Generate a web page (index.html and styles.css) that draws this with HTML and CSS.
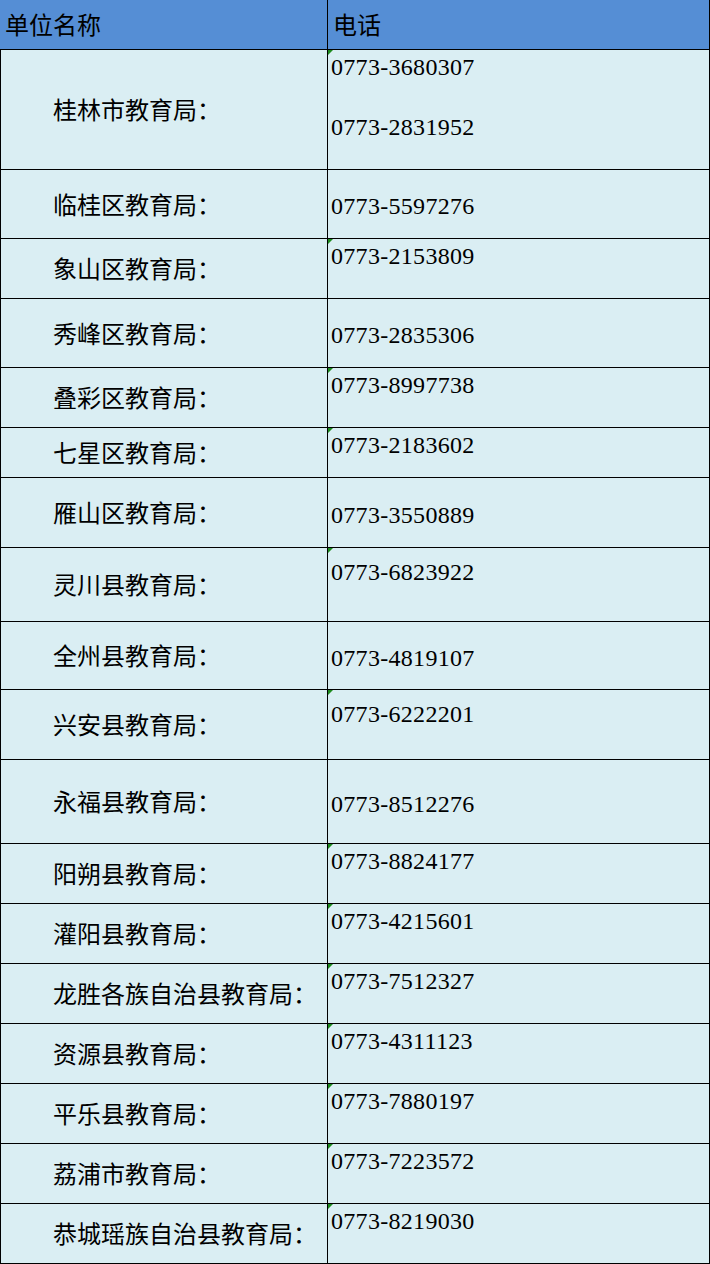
FILE: index.html
```html
<!DOCTYPE html>
<html lang="zh-CN">
<head>
<meta charset="utf-8">
<title>单位名称 电话</title>
<link rel="stylesheet" href="styles.css">
</head>
<body>
<div class="sheet">
  <div class="row head h50">
    <div class="name">单位名称</div>
    <div class="tel">电话</div>
  </div>
  <div class="row h120">
    <div class="name">桂林市教育局：</div>
    <div class="tel top mark multi"><span>0773-3680307</span><span>0773-2831952</span></div>
  </div>
  <div class="row h69">
    <div class="name">临桂区教育局：</div>
    <div class="tel">0773-5597276</div>
  </div>
  <div class="row h60">
    <div class="name">象山区教育局：</div>
    <div class="tel top mark">0773-2153809</div>
  </div>
  <div class="row h69">
    <div class="name">秀峰区教育局：</div>
    <div class="tel">0773-2835306</div>
  </div>
  <div class="row h60">
    <div class="name">叠彩区教育局：</div>
    <div class="tel top mark">0773-8997738</div>
  </div>
  <div class="row h50">
    <div class="name">七星区教育局：</div>
    <div class="tel top mark">0773-2183602</div>
  </div>
  <div class="row h70">
    <div class="name">雁山区教育局：</div>
    <div class="tel">0773-3550889</div>
  </div>
  <div class="row h74">
    <div class="name">灵川县教育局：</div>
    <div class="tel top low mark">0773-6823922</div>
  </div>
  <div class="row h68">
    <div class="name">全州县教育局：</div>
    <div class="tel">0773-4819107</div>
  </div>
  <div class="row h70">
    <div class="name">兴安县教育局：</div>
    <div class="tel top low mark">0773-6222201</div>
  </div>
  <div class="row h84">
    <div class="name">永福县教育局：</div>
    <div class="tel">0773-8512276</div>
  </div>
  <div class="row h60">
    <div class="name">阳朔县教育局：</div>
    <div class="tel top mark">0773-8824177</div>
  </div>
  <div class="row h60">
    <div class="name">灌阳县教育局：</div>
    <div class="tel top mark">0773-4215601</div>
  </div>
  <div class="row h60">
    <div class="name">龙胜各族自治县教育局：</div>
    <div class="tel top mark">0773-7512327</div>
  </div>
  <div class="row h60">
    <div class="name">资源县教育局：</div>
    <div class="tel top mark">0773-4311123</div>
  </div>
  <div class="row h60">
    <div class="name">平乐县教育局：</div>
    <div class="tel top mark">0773-7880197</div>
  </div>
  <div class="row h60">
    <div class="name">荔浦市教育局：</div>
    <div class="tel top mark">0773-7223572</div>
  </div>
  <div class="row h60">
    <div class="name">恭城瑶族自治县教育局：</div>
    <div class="tel top mark">0773-8219030</div>
  </div>
</div>
</body>
</html>
```

FILE: styles.css
```css
* {
  box-sizing: border-box;
}

html, body {
  margin: 0;
  padding: 0;
  background: #ffffff;
}

.sheet {
  width: 710px;
  font-family: "Liberation Serif", "Noto Sans CJK SC", serif;
  font-size: 24px;
  line-height: 28px;
  color: #000;
}

.row {
  display: flex;
  border-bottom: 1px solid #000;
  background: #daeef3;
}

.h50 { height: 50px; }
.h60 { height: 60px; }
.h68 { height: 68px; }
.h69 { height: 69px; }
.h70 { height: 70px; }
.h74 { height: 74px; }
.h84 { height: 84px; }
.h120 { height: 120px; }

.name {
  width: 328px;
  flex: none;
  border-left: 1px solid #000;
  border-right: 1px solid #000;
  padding: 3px 0 0 52px;
  display: flex;
  align-items: center;
  white-space: nowrap;
}

.tel {
  flex: 1;
  border-right: 1px solid #000;
  padding: 4px 0 0 3px;
  display: flex;
  align-items: center;
  position: relative;
  white-space: nowrap;
  letter-spacing: 0.3px;
}

.tel.top {
  align-items: flex-start;
  padding-top: 3px;
}

.tel.low {
  padding-top: 10px;
}

.tel.multi {
  flex-direction: column;
  gap: 32px;
}

.tel.mark::before {
  content: "";
  position: absolute;
  left: 0;
  top: 0;
  width: 0;
  height: 0;
  border-top: 5px solid #1e8c1e;
  border-right: 5px solid transparent;
}

.head {
  background: #558ed5;
}

.head .name {
  border-left: none;
  padding: 3px 0 0 5px;
}

.head .tel {
  padding: 3px 0 0 5px;
  letter-spacing: 0;
}
```
